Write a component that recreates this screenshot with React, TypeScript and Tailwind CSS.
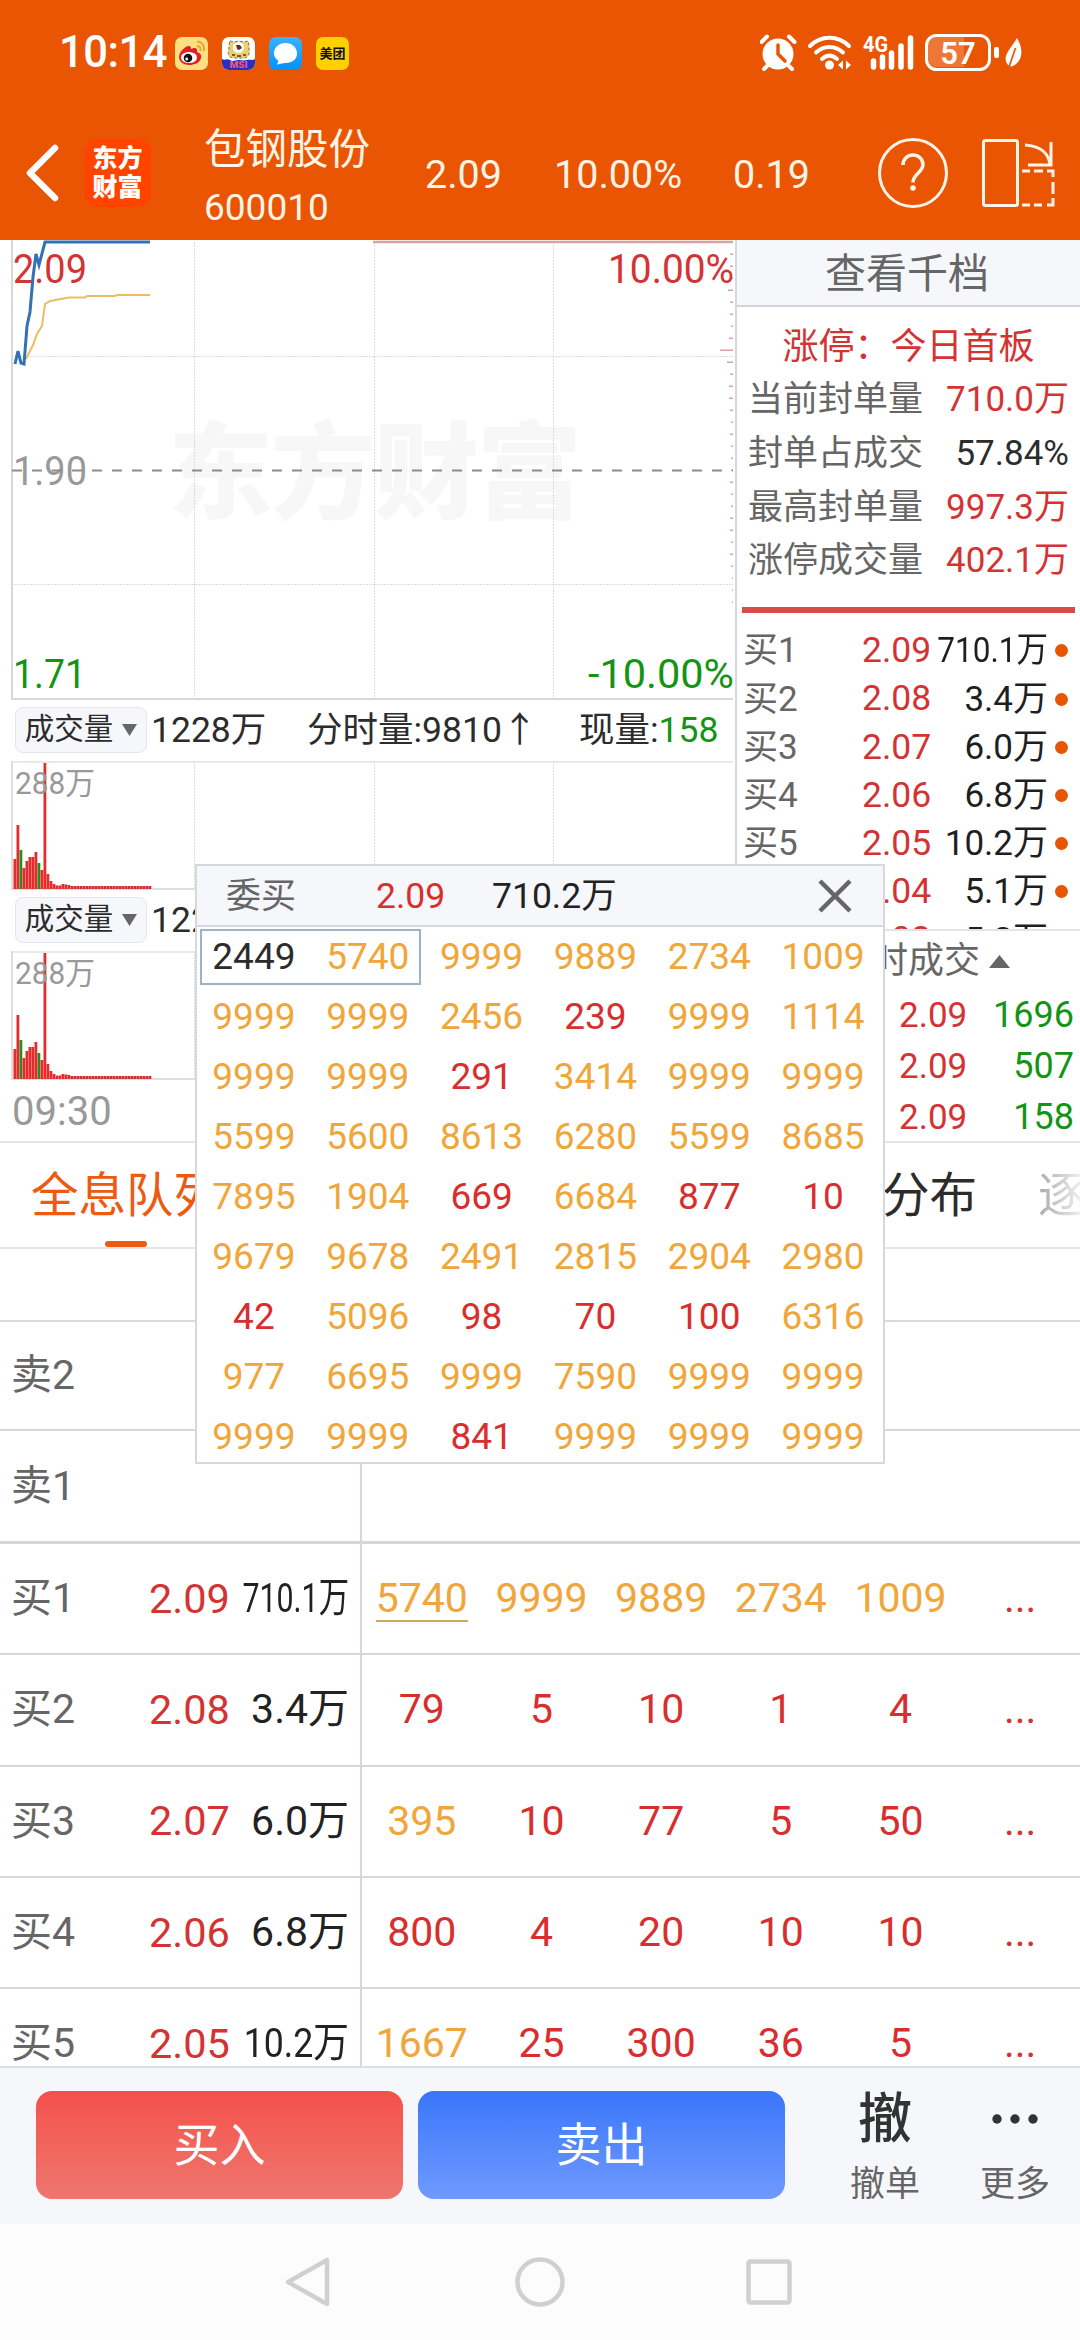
import React from 'react';

type Tone = 'red' | 'gold' | 'dark';

const toneClass: Record<Tone, string> = {
  red: 'text-[#d92e2e]',
  gold: 'text-[#f0a63a]',
  dark: 'text-[#2c2c2c]',
};

interface BookRow {
  label: string;
  price?: string;
  volume?: string;
  fit?: string;
  orders?: [string, Tone][];
}

const bookRows: BookRow[] = [
  { label: '卖2' },
  { label: '卖1' },
  {
    label: '买1', price: '2.09', volume: '710.1万', fit: 'scale-x-[0.74]',
    orders: [['5740', 'gold'], ['9999', 'gold'], ['9889', 'gold'], ['2734', 'gold'], ['1009', 'gold']],
  },
  {
    label: '买2', price: '2.08', volume: '3.4万',
    orders: [['79', 'red'], ['5', 'red'], ['10', 'red'], ['1', 'red'], ['4', 'red']],
  },
  {
    label: '买3', price: '2.07', volume: '6.0万',
    orders: [['395', 'gold'], ['10', 'red'], ['77', 'red'], ['5', 'red'], ['50', 'red']],
  },
  {
    label: '买4', price: '2.06', volume: '6.8万',
    orders: [['800', 'red'], ['4', 'red'], ['20', 'red'], ['10', 'red'], ['10', 'red']],
  },
  {
    label: '买5', price: '2.05', volume: '10.2万', fit: 'scale-x-[0.87]',
    orders: [['1667', 'gold'], ['25', 'red'], ['300', 'red'], ['36', 'red'], ['5', 'red']],
  },
];

const queue = [
  ['2449', '5740', '9999', '9889', '2734', '1009'],
  ['9999', '9999', '2456', '239', '9999', '1114'],
  ['9999', '9999', '291', '3414', '9999', '9999'],
  ['5599', '5600', '8613', '6280', '5599', '8685'],
  ['7895', '1904', '669', '6684', '877', '10'],
  ['9679', '9678', '2491', '2815', '2904', '2980'],
  ['42', '5096', '98', '70', '100', '6316'],
  ['977', '6695', '9999', '7590', '9999', '9999'],
  ['9999', '9999', '841', '9999', '9999', '9999'],
];

const queueTone = (value: string, index: number): Tone => {
  if (index === 0) return 'dark';
  return Number(value) < 900 ? 'red' : 'gold';
};

const bidLevels = [
  { label: '买1', price: '2.09', volume: '710.1万' },
  { label: '买2', price: '2.08', volume: '3.4万' },
  { label: '买3', price: '2.07', volume: '6.0万' },
  { label: '买4', price: '2.06', volume: '6.8万' },
  { label: '买5', price: '2.05', volume: '10.2万' },
  { label: '买6', price: '2.04', volume: '5.1万' },
  { label: '买7', price: '2.03', volume: '5.2万' },
];

const limitStats = [
  { label: '当前封单量', value: '710.0万', color: 'text-[#d43333]' },
  { label: '封单占成交', value: '57.84%', color: 'text-[#2c2c2c]' },
  { label: '最高封单量', value: '997.3万', color: 'text-[#d43333]' },
  { label: '涨停成交量', value: '402.1万', color: 'text-[#d43333]' },
];

const ticks = [['2.09', '1696'], ['2.09', '507'], ['2.09', '158']];

// Minute volume bars, heights in px; the tail after the limit-up is flat
const volumeBars = [30, 64, 39, 21, 28, 32, 32, 37, 26, 19, 126, 15, 8, 5, 3.5, 3.5, 5, 4.5, 4, ...Array(27).fill(3)];
const fallingBars = [2, 8];

// Volume-at-price marks on the right edge of the price chart
const profileMarks = [3, 3, 1, 5, 3, 3, 2, 4, 13, 6, 3, 4, 4, 3, 2, 3, 2, 2, 2, 3, 2, 2, 3, 3, 2, 3, 2, 1, 1, 1];

const StatusBar: React.FC = () => (
  <div className="flex h-[106px] items-center pl-[59px] pr-[56px] text-white">
    <span className="mr-[5px] w-[111px] text-[43.500px] leading-none font-medium tracking-[-0.5px]">10:14</span>
    <div className="flex gap-[14px]">
      <svg width="33" height="33" viewBox="0 0 33 33">
        <rect width="33" height="33" rx="7" fill="#ffdf80" />
        <path d="M4 20c0-5 6-11 10-11 2 0 2 2 2 3 4-2 7-1 6 3 3 1 5 3 4 6-1 5-7 7-12 7S4 25 4 20Z" fill="#df2029" />
        <ellipse cx="14" cy="20.5" rx="8" ry="5.5" fill="#fff" />
        <circle cx="13" cy="21" r="4.3" fill="#111" />
        <circle cx="11.7" cy="22" r="1.4" fill="#fff" />
        <path d="M22 5c5-1 8 4 7 9M22 9c3 0 4 2 3.500 5" fill="none" stroke="#eda434" strokeWidth="2" />
      </svg>
      <svg width="33" height="33" viewBox="0 0 33 33">
        <rect width="33" height="33" rx="7" fill="#fff" />
        <path d="M0 22c3 2 5-1 8 1s5 0 8 0 6 1 9 0 5 1 8-1v4a7 7 0 0 1-7 7H7a7 7 0 0 1-7-7Z" fill="#2630c4" />
        <path d="M8 4l4 1c3-1 7-1 10 0l4-1c1 2 1 5 1 8 1 5-1 9-5 9H12c-5 0-7-4-5-9 0-3 0-6 1-8Z" fill="#ecd070" stroke="#8a6f30" strokeWidth="1" strokeDasharray="3 2" />
        <circle cx="16.500" cy="10.500" r="5.500" fill="#fff" />
        <path d="M14 8h4l2 3-3 2-2-1Z" fill="#5a3421" />
        <path d="M10 18h3m2 1h4m2-1h3" stroke="#5a3421" strokeWidth="1.300" />
        <text x="16.500" y="31" textAnchor="middle" fontSize="8.500" fontWeight="900" textLength="18" lengthAdjust="spacingAndGlyphs" fill="#f0527c">MSI</text>
      </svg>
      <svg width="33" height="33" viewBox="0 0 33 33">
        <defs>
          <linearGradient id="chat" x1="0" y1="0" x2="0" y2="1">
            <stop offset="0" stopColor="#3eb2fb" />
            <stop offset="1" stopColor="#0091ff" />
          </linearGradient>
        </defs>
        <rect width="33" height="33" rx="7" fill="url(#chat)" />
        <path d="M16.500 6C23 6 28 10.500 28 16.500S23 26 17 26c-2 0-3 .2-4 .6l-5 .8 1.500-3.600C6.500 22 5 19.500 5 16.500 5 10.500 10 6 16.500 6Z" fill="#fff" />
      </svg>
      <span className="flex h-[33px] w-[33px] items-center justify-center rounded-[7px] bg-[#ffd100] text-[13px] leading-none font-bold text-[#111]">美团</span>
    </div>
    <svg className="ml-auto" width="264" height="40" viewBox="0 0 264 40">
      {/* alarm */}
      <circle cx="18" cy="21" r="15.500" fill="#fff" />
      <path d="M1.500 9 7 3.500M34.500 9 29 3.500M7 33l-3 3M29 33l3 3" stroke="#fff" strokeWidth="4" strokeLinecap="round" />
      <path d="M18 12v9l7 7" fill="none" stroke="#ea5504" strokeWidth="3.500" strokeLinecap="round" />
      {/* wifi */}
      <g fill="none" stroke="#fff" strokeWidth="4" strokeLinecap="round">
        <path d="M50 13c11-11 28-11 39 0M56 19.500c8-7.500 19-7.500 27 0M62 26c5-4.500 10-4.500 15 0" />
      </g>
      <circle cx="69.500" cy="32" r="4.500" fill="#fff" />
      <path d="m83 27.500v9l-5-4.500Zm3 0v9l5-4.500Z" fill="#fff" />
      {/* signal */}
      <text x="103" y="19" fontSize="22" fontWeight="700" textLength="25" lengthAdjust="spacingAndGlyphs" fill="#fff">4G</text>
      <path d="M113.500 28v6M122.500 24v10M131.500 20v14M141 13v21M150.500 5v29" stroke="#fff" strokeWidth="5.500" strokeLinecap="round" />
      {/* battery */}
      <path d="M176 4h28v30h-28a9 9 0 0 1-9-9V13a9 9 0 0 1 9-9Z" fill="#fff" opacity=".2" />
      <rect x="166.500" y="2.500" width="63" height="34" rx="10" fill="none" stroke="#fff" strokeWidth="3" />
      <text x="198" y="31" textAnchor="middle" fontSize="31" fontWeight="600" fill="#fff">57</text>
      <rect x="234" y="14" width="5" height="11" rx="2" fill="#fff" />
      <path d="M257 5c6 10 7 22-4 28-2 1-4 0-5-1-7-9 3-16 9-27Z" fill="#fff" />
      <path d="M255.500 15 249 34" stroke="#ea5504" strokeWidth="1.700" />
    </svg>
  </div>
);

const Header: React.FC = () => (
  <header className="flex h-[134px] items-center pl-[26px] pr-[24px] text-[#fff4e6]">
    <svg width="34" height="58" viewBox="0 0 34 58">
      <path d="M29 4 4 29l25 25" fill="none" stroke="#fff" strokeWidth="6.500" strokeLinecap="round" strokeLinejoin="round" />
    </svg>
    <div className="ml-6 flex h-[68px] w-[67px] flex-col items-center justify-center rounded-[13px] bg-[#ff4400] text-[25px] leading-[29px] font-black text-white">
      <span>东方</span>
      <span>财富</span>
    </div>
    <div className="ml-[53px] flex w-[221px] flex-col gap-[17px] pt-[9px]">
      <span className="text-[41.500px] leading-[44px]">包钢股份</span>
      <span className="text-[37px] leading-[38px]">600010</span>
    </div>
    <div className="flex pt-[3px] text-[39.500px] leading-none">
      <span className="w-[129px]">2.09</span>
      <span className="w-[179px]">10.00%</span>
      <span className="w-[144px]">0.19</span>
    </div>
    <svg width="72" height="72" viewBox="0 0 72 72" fill="none" stroke="#fff4e6">
      <circle cx="36" cy="36" r="33.500" strokeWidth="3" />
      <path d="M26 28c0-6 4.500-10 10-10s10 4 10 9.500c0 8-10 9-10 18" strokeWidth="3.500" />
      <circle cx="36" cy="51" r="2.800" fill="#fff4e6" stroke="none" />
    </svg>
    <svg className="ml-auto" width="74" height="68" viewBox="0 0 74 68" fill="none" stroke="#fff4e6" strokeWidth="3">
      <rect x="1.500" y="1.500" width="34" height="65" rx="2" />
      <path d="M43 6c16 1 24 9 25 20M69 3v23H46" />
      <path d="M40 32h8M52 32h9M65 32h6v6M71 43v12M71 59v7h-6M60 66h-8M48 66h-8" />
    </svg>
  </header>
);

const PriceChart: React.FC = () => (
  <svg className="block" width="735" height="460" viewBox="0 240 735 460">
    <text x="168" y="510" fontSize="105" fontWeight="900" textLength="414" fill="#f7f7f7">东方财富</text>
    <path d="M194.500 242v457M374.500 242v457M553.500 242v457M12 356.500h721M12 584.500h721" stroke="#dcdcdc" strokeWidth="1" strokeDasharray="2 1" />
    <path d="M12 240v459h721" fill="none" stroke="#d8d8d8" strokeWidth="2" />
    <path d="M373 242h360" stroke="#dfa0a0" strokeWidth="2.500" />
    {profileMarks.map((w, i) => (
      <rect key={i} x={733 - w} y={253.5 + i * 12} width={w} height="1.500" fill="#dfa0a0" />
    ))}
    <g fontSize="40">
      <text x="13" y="283" textLength="74" lengthAdjust="spacingAndGlyphs" fill="#d43333">2.09</text>
      <text x="13" y="485" textLength="74" lengthAdjust="spacingAndGlyphs" fill="#999">1.90</text>
      <text x="13" y="688" textLength="73" lengthAdjust="spacingAndGlyphs" fill="#149414">1.71</text>
      <text x="608" y="283" textLength="126" lengthAdjust="spacingAndGlyphs" fill="#d43333">10.00%</text>
      <text x="588" y="688" textLength="146" lengthAdjust="spacingAndGlyphs" fill="#149414">-10.00%</text>
    </g>
    <path d="M12 470.500h721" stroke="#8c8c8c" strokeWidth="2" strokeDasharray="10 10" />
    <path d="m26 359 7-14 4-11 5-8 3-22 5-3 19-3.500h16l2-1.500h28l2-1h33" fill="none" stroke="#ebbd62" strokeWidth="2" />
    <path d="m15 364 3-13 3 12 3 1 3-38 3-14 3-35 3-23 3 11 6-23h105" fill="none" stroke="#3470b4" strokeWidth="3" />
  </svg>
);

const VolumeHeader: React.FC = () => (
  <div className="flex h-[46px] items-center pl-[15px] text-[35.500px] leading-none text-[#2c2c2c]">
    <div className="flex h-[46px] w-[132px] items-center justify-center gap-[9px] rounded-lg border border-[#e3e6ea] bg-[#f6f7fa] text-[29.500px]">
      成交量
      <svg width="15" height="12" viewBox="0 0 15 12"><path d="M0 0h15L7.500 12Z" fill="#666" /></svg>
    </div>
    <span className="ml-[4px] w-[156px] pt-[2px]">1228万</span>
    <span className="w-[272px] pt-[2px] whitespace-nowrap">分时量:9810↑</span>
    <span className="pt-[2px] whitespace-nowrap">现量:<span className="text-[#149414]">158</span></span>
  </div>
);

const VolumeChart: React.FC = () => (
  <svg className="block" width="735" height="129" viewBox="0 0 735 129">
    <path d="M12 1h721" stroke="#e2e2e2" strokeWidth="1.500" />
    <path d="M12 0v128h721" fill="none" stroke="#dedede" strokeWidth="2" />
    <path d="M194.500 0v128M374.500 0v128M553.500 0v128" stroke="#dcdcdc" strokeDasharray="2 1" />
    {volumeBars.map((h, i) => (
      <rect key={i} x={13.5 + i * 3} y={128 - h} width="2.800" height={h} fill={fallingBars.includes(i) ? '#2f8a1e' : i > 18 ? '#cc3030' : '#e52b2b'} />
    ))}
    <text x="15" y="33" fontSize="31" textLength="80" lengthAdjust="spacingAndGlyphs" fill="#999">288万</text>
  </svg>
);

const SidePanel: React.FC = () => (
  <aside className="flex w-[345px] flex-col border-l-2 border-[#d5d8dc] text-[35px] leading-none">
    <div className="flex h-[67px] items-center justify-center border-b-2 border-[#d0d4da] bg-[#f6f7fa] pt-[5px] pr-[3px] text-[41px] text-[#666]">查看千档</div>
    <div className="mt-[21px] flex h-[38px] items-center justify-center text-[36px] text-[#d43333]">涨停：今日首板</div>
    <div className="mt-[7px]">
      {limitStats.map((s) => (
        <div key={s.label} className="flex h-[53.800px] items-center justify-between pl-[11px] pr-[11px]">
          <span className="text-[#666]">{s.label}</span>
          <span className={s.color}>{s.value}</span>
        </div>
      ))}
    </div>
    <div className="mx-[5px] mt-[19px] h-[6px] shrink-0 bg-[#d94c4c]" />
    <div className="mt-[14px] h-[304px] shrink-0 overflow-hidden border-b-2 border-[#e2e4e8]">
      {bidLevels.map((b) => (
        <div key={b.label} className="flex h-[48.200px] items-center pl-[6px] pr-[12px]">
          <span className="w-[119px] shrink-0 text-[#666]">{b.label}</span>
          <span className="w-[70px] shrink-0 text-[35.500px] text-[#d43333]">{b.price}</span>
          <span className="flex min-w-0 flex-1 justify-end">
            <span className={b.volume.length > 5 ? 'shrink-0 origin-right scale-x-[0.9] whitespace-nowrap text-[#1f1f1f]' : 'shrink-0 whitespace-nowrap text-[#1f1f1f]'}>{b.volume}</span>
          </span>
          <span className="ml-[7px] h-[13px] w-[13px] shrink-0 rounded-full bg-[#e85500]" />
        </div>
      ))}
    </div>
    <div className="flex h-[58px] items-center justify-end gap-[9px] pt-[3px] pr-[70px] text-[36px] text-[#666]">
      分时成交
      <svg width="21" height="13" viewBox="0 0 21 13"><path d="M0 13h21L10.500 0Z" fill="#666" /></svg>
    </div>
    {ticks.map(([price, volume]) => (
      <div key={volume} className="flex h-[51px] items-center justify-between pt-[3px] pl-[162px] pr-[6px]">
        <span className="text-[#d43333]">{price}</span>
        <span className="text-[36px] text-[#149414]">{volume}</span>
      </div>
    ))}
  </aside>
);

const QueuePopup: React.FC = () => (
  <div className="absolute top-[864px] left-[195px] flex h-[600px] w-[690px] flex-col border-2 border-[#d5d8dc] bg-white leading-none">
    <div className="flex h-[61px] shrink-0 items-center border-b-2 border-[#d5d8dc] bg-[#f6f7fa] pr-[31px] pl-[29px] text-[35.500px]">
      <span className="w-[150px] pt-[2px] text-[35px] text-[#666]">委买</span>
      <span className="w-[116px] pt-[2px] text-[#d92e2e]">2.09</span>
      <span className="pt-[2px] text-[#222]">710.2万</span>
      <svg className="ml-auto" width="34" height="34" viewBox="0 0 34 34"><path d="m2 2 30 30M32 2 2 32" stroke="#666" strokeWidth="4.500" /></svg>
    </div>
    <div className="relative grid auto-rows-[59.900px] grid-cols-6 pr-[3px] text-[37px]">
      {queue.flat().map((value, i) => (
        <span key={i} className={`flex items-center justify-center ${toneClass[queueTone(value, i)]}`}>
          {value}
        </span>
      ))}
      <div className="absolute top-[2px] left-[3px] h-[56px] w-[221px] border-2 border-[#9db4c6]" />
    </div>
  </div>
);

const Tabs: React.FC = () => (
  <div className="flex h-[108px] border-y-2 border-[#e4e5e8] text-[47.500px] leading-none whitespace-nowrap">
    <div className="flex w-[158px] flex-col items-center pl-[94px] text-[#ee5a12]">
      <span className="mt-[30px]">全息队列</span>
      <span className="mt-auto h-[6px] w-[42px] rounded-full bg-[#ee5a12]" />
    </div>
    <span className="mt-[30px] ml-auto text-[#2c2c2c]">成交分布</span>
    <span className="mt-[30px] ml-[61px] w-[42px] overflow-hidden bg-gradient-to-r from-[#aaa] to-[#eee] bg-clip-text text-transparent">逐笔</span>
  </div>
);

const OrderBook: React.FC = () => (
  <div className="h-[817px] overflow-hidden leading-none">
    <div className="flex h-[73px] border-b-2 border-[#d8dadf]">
      <div className="w-[362px] border-r-2 border-[#d5d7dc]" />
    </div>
    {bookRows.map((row) => (
      <div
        key={row.label}
        className={`flex text-[41px] border-[#d5d7dc] ${row.label === '卖1' ? 'h-[113px] border-b-[3px]' : row.label === '卖2' ? 'h-[109px] border-b-2' : 'h-[111.300px] border-b-2'}`}
      >
        <div className="flex w-[362px] items-center border-r-2 border-[#d5d7dc] pl-[11px] pr-[11px]">
          <span className="w-[138px] shrink-0 text-[#666]">{row.label}</span>
          <span className="w-[82px] shrink-0 text-[41.500px] text-[#d43333]">{row.price}</span>
          <span className="flex min-w-0 flex-1 justify-end text-[#222]">
            <span className={`shrink-0 origin-right whitespace-nowrap ${row.fit ?? ''}`}>{row.volume}</span>
          </span>
        </div>
        {row.orders && (
          <div className="grid flex-1 grid-cols-6 items-center justify-items-center">
            {row.orders.map(([value, tone], i) => (
              <span
                key={i}
                className={`${toneClass[tone]} ${row.label === '买1' && i === 0 ? 'mt-[3px] border-b-2 border-[#cfa95c] pb-px' : ''}`}
              >
                {value}
              </span>
            ))}
            <span className="text-[#d43333]">...</span>
          </div>
        )}
      </div>
    ))}
  </div>
);

const TradeBar: React.FC = () => (
  <footer className="flex h-[158px] border-t-2 border-[#dcdfe4] bg-[#f6f7fa] pt-[23px] pl-[36px] leading-none">
    <button className="h-[108px] w-[367px] rounded-2xl bg-gradient-to-b from-[#f4504a] to-[#ed766f] text-[46px] text-white">买入</button>
    <button className="ml-[15px] h-[108px] w-[367px] rounded-2xl bg-gradient-to-b from-[#3a75fa] to-[#6f9aff] text-[46px] text-white">卖出</button>
    <div className="ml-[40px] flex w-[120px] flex-col items-center">
      <span className="mt-[2px] text-[54px] font-medium text-[#333]">撤</span>
      <span className="mt-[20px] text-[35px] text-[#666]">撤单</span>
    </div>
    <div className="ml-[9px] flex w-[122px] flex-col items-center">
      <svg className="mt-[1px]" width="46" height="54" viewBox="0 0 46 54" fill="#333">
        <circle cx="5" cy="27" r="4.700" />
        <circle cx="23" cy="27" r="4.700" />
        <circle cx="41" cy="27" r="4.700" />
      </svg>
      <span className="mt-[21px] text-[35px] text-[#666]">更多</span>
    </div>
  </footer>
);

const NavBar: React.FC = () => (
  <nav className="flex h-[116px] items-center justify-center gap-[181px] bg-[#fcfcfc] pr-[4px]">
    <svg width="50" height="50" viewBox="0 0 50 50" fill="none" stroke="#d0d0d0" strokeWidth="4.500" strokeLinejoin="round">
      <path d="M43 3v44L4 25Z" />
    </svg>
    <svg width="50" height="50" viewBox="0 0 50 50" fill="none" stroke="#d0d0d0" strokeWidth="4.500">
      <circle cx="25" cy="25" r="22.500" />
    </svg>
    <svg width="46" height="46" viewBox="0 0 46 46" fill="none" stroke="#d0d0d0" strokeWidth="4.500">
      <rect x="2.500" y="2.500" width="41" height="41" rx="2" />
    </svg>
  </nav>
);

export default function App() {
  return (
    <div lang="zh-CN" className="relative h-[2340px] w-[1080px] overflow-hidden bg-white font-['Roboto','Noto_Sans_CJK_SC',sans-serif]">
      <div className="bg-[#ea5504]">
        <StatusBar />
        <Header />
      </div>
      <div className="flex h-[901px]">
        <div className="w-[735px]">
          <PriceChart />
          <div className="mt-[7px]"><VolumeHeader /></div>
          <div className="mt-[8px]"><VolumeChart /></div>
          <div className="mt-[7px]"><VolumeHeader /></div>
          <div className="mt-[8px]"><VolumeChart /></div>
          <div className="mt-[10px] pl-[12px] text-[40px] leading-[44px] text-[#999]">09:30</div>
        </div>
        <SidePanel />
      </div>
      <Tabs />
      <OrderBook />
      <TradeBar />
      <NavBar />
      <QueuePopup />
    </div>
  );
}
